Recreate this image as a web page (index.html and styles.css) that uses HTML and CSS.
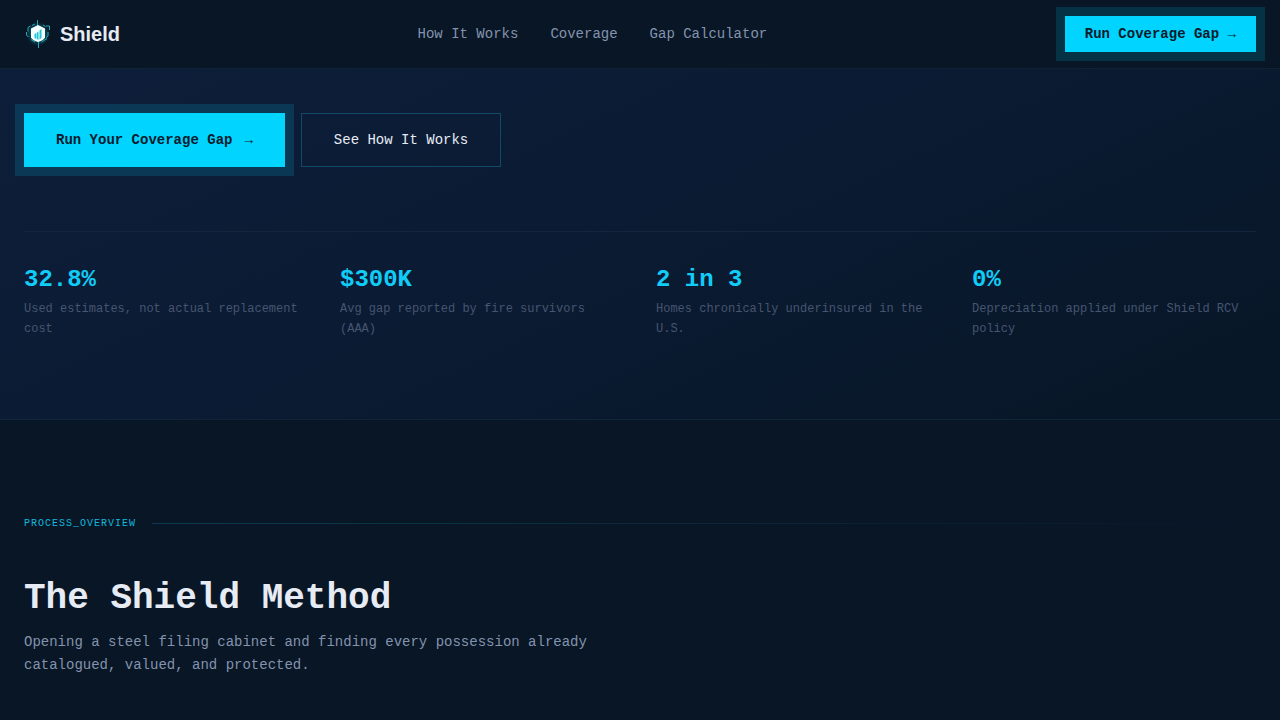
FILE: index.html
```html
<!DOCTYPE html>
<html lang="en">
<head>
<meta charset="utf-8">
<meta name="viewport" content="width=device-width, initial-scale=1">
<title>Shield</title>
<link rel="stylesheet" href="styles.css">
</head>
<body>
<header class="nav">
  <a class="brand" href="#">
    <svg class="brand-icon" viewBox="0 0 28 28" aria-hidden="true">
      <defs>
        <radialGradient id="halo"><stop offset="0.5" stop-color="#12b5c4" stop-opacity="0.4"/><stop offset="1" stop-color="#12b5c4" stop-opacity="0"/></radialGradient>
      </defs>
      <circle cx="14" cy="14" r="12" fill="url(#halo)"/>
      <g fill="none" stroke="#1fa9b6" stroke-width="1">
        <path d="M13.5 0v6M14.5 21v7"/>
        <path d="M11 4 8 5.500M6.500 6 4 7.500v4M19 5l2.500 1.500M22 6h3.500v4"/>
        <path d="M2.500 12v3l2 2M24 12v4l-2 1.500M7 19.500l4 2.500M23 18.500l-5.500 3.500"/>
      </g>
      <path d="M14 5 21 8.500v9c-1 2-4 3.500-7 4.500-3-1-6-2.500-7-4.500v-9z" fill="#f4ffff"/>
      <path d="M10.500 14l2-1v6l-2-1zM13 12.500l1.500-1V20L13 19zM15.500 10.500 17.500 9v9l-2 1.500z" fill="#20c5d8"/>
    </svg>
    <span>Shield</span>
  </a>
  <nav class="links" aria-label="Main">
    <a href="#method">How It Works</a>
    <a href="#coverage">Coverage</a>
    <a href="#calculator">Gap Calculator</a>
  </nav>
  <button class="btn btn-primary btn-small" type="button">Run Coverage Gap →</button>
</header>
<main>
  <section class="hero">
    <div class="actions">
      <button class="btn btn-primary btn-large" type="button"><span>Run Your Coverage Gap</span><span>→</span></button>
      <button class="btn btn-outline btn-large" type="button">See How It Works</button>
    </div>
    <dl class="stats">
      <div class="stat"><dt>32.8%</dt><dd>Used estimates, not actual replacement cost</dd></div>
      <div class="stat"><dt>$300K</dt><dd>Avg gap reported by fire survivors (AAA)</dd></div>
      <div class="stat"><dt>2 in 3</dt><dd>Homes chronically underinsured in the U.S.</dd></div>
      <div class="stat"><dt>0%</dt><dd>Depreciation applied under Shield RCV policy</dd></div>
    </dl>
  </section>
  <section class="method" id="method">
    <div class="eyebrow">PROCESS_OVERVIEW</div>
    <h2>The Shield Method</h2>
    <p>Opening a steel filing cabinet and finding every possession already catalogued, valued, and protected.</p>
  </section>
</main>
</body>
</html>
```
FILE: styles.css
```css
* { box-sizing: border-box; }

body {
  margin: 0;
  background: #081626;
  color: #e6ebf4;
  font-family: "Liberation Mono", monospace;
  font-size: 14px;
}

a { color: inherit; text-decoration: none; }

.nav {
  display: flex;
  align-items: center;
  justify-content: space-between;
  padding: 16px 24px;
  background: #081626;
  border-bottom: 1px solid #0f2236;
}

.brand {
  display: flex;
  align-items: center;
  gap: 8px;
  font: bold 20px/28px "Liberation Sans", Arial, sans-serif;
}

.brand-icon { width: 28px; height: 28px; }

.links { display: flex; gap: 32px; color: #8493ad; }

.btn {
  display: inline-flex;
  align-items: center;
  justify-content: center;
  gap: 12px;
  border: 0;
  font: 14px/20px "Liberation Mono", monospace;
  cursor: pointer;
}

.btn-primary {
  background: #00d4ff;
  color: #081a2c;
  font-weight: bold;
  box-shadow: 0 0 0 9px rgba(0, 212, 255, 0.15);
}

.btn-small { padding: 8px 20px; }

.btn-large { padding: 17px 32px; }

.btn-outline {
  background: transparent;
  color: #e6ebf4;
  border: 1px solid #114a66;
  padding-block: 16px;
}

.hero {
  padding: 44px 24px 80px;
  background: linear-gradient(155deg, #0d1e3a 0%, #0b1b33 45%, #081728 90%);
  border-bottom: 1px solid #0f263a;
}

.actions { display: flex; gap: 16px; }

.stats {
  display: grid;
  grid-template-columns: repeat(4, 1fr);
  gap: 32px;
  margin: 64px 0 0;
  padding-top: 32px;
  border-top: 1px solid #13263d;
}

.stat dt {
  color: #10cdf8;
  font-size: 24px;
  font-weight: bold;
  line-height: 32px;
}

.stat dd {
  margin: 3px 0 0;
  color: #465570;
  font-size: 12px;
  line-height: 20px;
}

.method { padding: 96px 24px 40px; }

.eyebrow {
  display: flex;
  align-items: center;
  gap: 16px;
  color: #12b8de;
  font-size: 10px;
  line-height: 15px;
  letter-spacing: 1px;
}

.eyebrow::after {
  content: "";
  flex: 1;
  height: 1px;
  background: linear-gradient(90deg, #0b3a4e, #081626);
}

h2 {
  margin: 48px 0 0;
  font-size: 36px;
  line-height: 40px;
}

.method p {
  max-width: 576px;
  margin: 12px 0 0;
  color: #8493ad;
  line-height: 23px;
}
```
